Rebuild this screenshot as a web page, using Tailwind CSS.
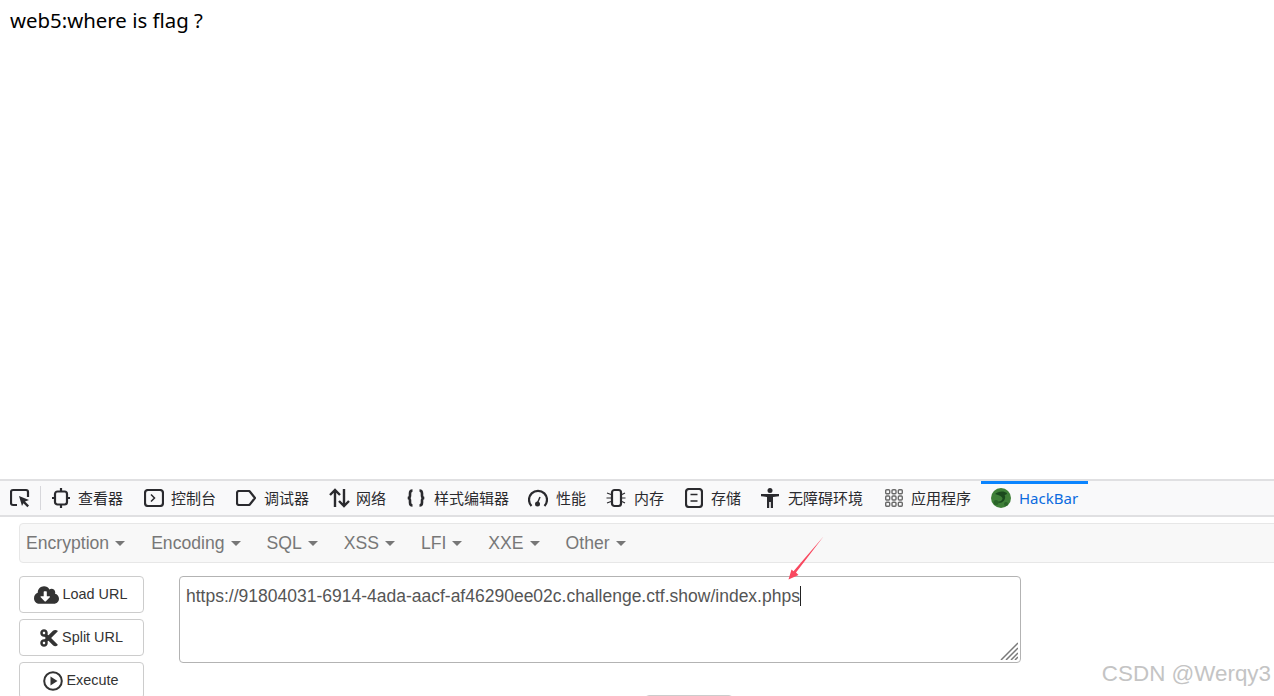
<!DOCTYPE html>
<html lang="zh">
<head>
    <meta charset="UTF-8">
    <meta name="viewport" content="width=device-width, initial-scale=1.0">
    <title>web5</title>
    <script src="https://cdn.jsdelivr.net/npm/@tailwindcss/browser@4"></script>
</head>
<body class="relative h-[696px] overflow-hidden bg-white font-['Liberation_Sans',sans-serif]">
    <!-- page -->
    <div class="h-[479px] pl-[10px] pt-[6px] text-[20.4px] leading-[28px] text-black font-['Noto_Sans',sans-serif]">web5:where is flag ?</div>

    <!-- devtools tabs -->
    <div class="flex h-[38px] items-stretch border-t-2 border-b-2 border-[#e0e0e2] bg-[#f9f9fa] text-[15px] text-[#2a2a2e] font-['Noto_Sans_CJK_SC',sans-serif]">
        <div class="flex w-[40px] items-center pl-[10px]">
            <svg class="w-[21px] h-[20px]" viewBox="0 0 21 20" fill="none" stroke="#2a2a2e" stroke-width="2.2"><path d="M7 17H3a2 2 0 0 1-2-2V4a2 2 0 0 1 2-2h13a2 2 0 0 1 2 2v5"/><path d="M9 8l10 4-4 1.6 4 4-1.6 1.6-4-4L12 18z" fill="#2a2a2e" stroke="none"/></svg>
        </div>
        <div class="my-[5px] w-px bg-[#d7d7db]"></div>
        <div class="flex items-center pl-[11px] w-[93px]">
            <svg class="w-[18px] h-[20px] mr-[8px]" viewBox="0 0 18 20" fill="none" stroke="#2a2a2e" stroke-width="2.2"><rect x="3" y="3.5" width="12" height="13" rx="2.5"/><path d="M9 0v3.500M9 16.500V20M0 10h3M15 10h3"/></svg>
            <span>查看器</span>
        </div>
        <div class="flex items-center pl-[10px] w-[92px]">
            <svg class="w-[20px] h-[18px] mr-[7px]" viewBox="0 0 20 18" fill="none" stroke="#2a2a2e" stroke-width="2.2"><rect x="1" y="1" width="18" height="16" rx="3"/><path d="M7 5.500l3.500 3.500L7 12.500" stroke-width="1.5"/></svg>
            <span>控制台</span>
        </div>
        <div class="flex items-center pl-[10px] w-[93px]">
            <svg class="w-[20px] h-[16px] mr-[8px]" viewBox="0 0 20 16" fill="none" stroke="#2a2a2e" stroke-width="2.2"><path d="M3 1h9.500a2 2 0 0 1 1.500.7L19 8l-5 6.300a2 2 0 0 1-1.500.7H3a2 2 0 0 1-2-2V3a2 2 0 0 1 2-2z"/></svg>
            <span>调试器</span>
        </div>
        <div class="flex items-center pl-[10px] w-[77px]">
            <svg class="w-[21px] h-[20px] mr-[6px]" viewBox="0 0 21 20" fill="none" stroke="#2a2a2e" stroke-width="2.4"><path d="M6 19V2M1 7l5-5 5 5M15 1v17M10 13l5 5 5-5"/></svg>
            <span>网络</span>
        </div>
        <div class="flex items-center pl-[10px] w-[122px]">
            <svg class="w-[20px] h-[20px] mr-[8px]" viewBox="0 0 20 20" fill="none" stroke="#2a2a2e" stroke-width="2.6"><path d="M6.500 2.500C4.500 2.500 4 3.500 4 5.500v2c0 1.500-.8 2.500-2.300 2.500C3.200 10 4 11 4 12.500v2c0 2 .5 3 2.500 3M13.500 2.500c2 0 2.500 1 2.500 3v2c0 1.500.8 2.500 2.300 2.500-1.500 0-2.300 1-2.300 2.500v2c0 2-.5 3-2.500 3"/></svg>
            <span>样式编辑器</span>
        </div>
        <div class="flex items-center pl-[10px] w-[78px]">
            <svg class="w-[20px] h-[19px] mr-[8px]" viewBox="0 0 20 19" fill="none" stroke="#2a2a2e" stroke-width="2.2"><path d="M3.500 17A9 9 0 1 1 16.500 17"/><path d="M9 15l3-7" stroke-width="1.5"/><circle cx="9.500" cy="15" r="2.500" fill="#2a2a2e" stroke="none"/></svg>
            <span>性能</span>
        </div>
        <div class="flex items-center pl-[10px] w-[78px]">
            <svg class="w-[20px] h-[20px] mr-[8px]" viewBox="0 0 20 20" fill="none" stroke="#2a2a2e"><rect x="6" y="2" width="9" height="16" rx="2.500" stroke-width="2.2"/><path d="M1 5l4 1.500M0.500 10H5M1 15l4-1.500M16 6.500l3-1.500M16 10h3.500M16 13.500l3 1.500" stroke-width="1.2"/></svg>
            <span>内存</span>
        </div>
        <div class="flex items-center pl-[11px] w-[78px]">
            <svg class="w-[18px] h-[20px] mr-[8px]" viewBox="0 0 18 20" fill="none" stroke="#2a2a2e" stroke-width="2.2"><rect x="1" y="1" width="16" height="18" rx="3"/><path d="M5.500 6.500h7M5.500 13h7" stroke-width="1.5"/></svg>
            <span>存储</span>
        </div>
        <div class="flex items-center pl-[9px] w-[123px]">
            <svg class="w-[18px] h-[20px] mr-[9px]" viewBox="0 0 18 20" fill="#2a2a2e"><circle cx="9" cy="2.500" r="2.500"/><path d="M0 6h18v2.200l-6 .8V20H9.800v-6H8.200v6H6V9l-6-.8z"/></svg>
            <span>无障碍环境</span>
        </div>
        <div class="flex items-center pl-[10px] w-[106px]">
            <svg class="w-[18px] h-[18px] mr-[8px]" viewBox="0 0 18 18" fill="none" stroke="#6a6a6a" stroke-width="1.4"><rect x="0.700" y="0.700" width="4" height="4" rx="1"/><rect x="7" y="0.700" width="4" height="4" rx="1"/><rect x="13.300" y="0.700" width="4" height="4" rx="1"/><rect x="0.700" y="7" width="4" height="4" rx="1"/><rect x="7" y="7" width="4" height="4" rx="1"/><rect x="13.300" y="7" width="4" height="4" rx="1"/><rect x="0.700" y="13.300" width="4" height="4" rx="1"/><rect x="7" y="13.300" width="4" height="4" rx="1"/><rect x="13.300" y="13.300" width="4" height="4" rx="1"/></svg>
            <span>应用程序</span>
        </div>
        <div class="flex w-[107px] items-center border-t-[3px] border-[#0a84ff] pb-[3px] pl-[10px] text-[#0b6bdf] font-['Noto_Sans',sans-serif]">
            <svg class="w-[20px] h-[20px] mr-[8px]" viewBox="0 0 20 20"><circle cx="10" cy="10" r="10" fill="#3f8038"/><path d="M4 6c3-3 9-3.500 12-1 0 1-1 2-2.500 2 1.500 2 .5 6-3 7.500-2 .7-4 .3-5.500-.5 3 0 6.500-1 6.500-3.500 0-1.500-3-3.500-7.500-4.500z" fill="#1b4a1e"/><circle cx="5" cy="14.500" r="2.500" fill="#2a6429"/><circle cx="15" cy="16" r="2" fill="#2a6429"/></svg>
            <span>HackBar</span>
        </div>
    </div>

    <!-- hackbar panel -->
    <div class="px-[19px] pt-[6px]">
        <div class="-mr-[30px] flex h-[40px] items-center rounded-[4px] border border-[#e7e7e7] bg-[#f8f8f8] pl-[6px] text-[17.6px] text-[#777]">
            <div class="flex items-center mr-[26px]">Encryption<span class="ml-[6px] mt-[2px] border-x-[5px] border-t-[5px] border-x-transparent border-t-[#777]"></span></div>
            <div class="flex items-center mr-[26px]">Encoding<span class="ml-[6px] mt-[2px] border-x-[5px] border-t-[5px] border-x-transparent border-t-[#777]"></span></div>
            <div class="flex items-center mr-[26px]">SQL<span class="ml-[6px] mt-[2px] border-x-[5px] border-t-[5px] border-x-transparent border-t-[#777]"></span></div>
            <div class="flex items-center mr-[26px]">XSS<span class="ml-[6px] mt-[2px] border-x-[5px] border-t-[5px] border-x-transparent border-t-[#777]"></span></div>
            <div class="flex items-center mr-[26px]">LFI<span class="ml-[6px] mt-[2px] border-x-[5px] border-t-[5px] border-x-transparent border-t-[#777]"></span></div>
            <div class="flex items-center mr-[26px]">XXE<span class="ml-[6px] mt-[2px] border-x-[5px] border-t-[5px] border-x-transparent border-t-[#777]"></span></div>
            <div class="flex items-center">Other<span class="ml-[6px] mt-[2px] border-x-[5px] border-t-[5px] border-x-transparent border-t-[#777]"></span></div>
        </div>

        <div class="mt-[13px] flex items-start">
            <div class="flex w-[125px] flex-col gap-[6px] text-[14.4px] text-[#333]">
                <div class="flex h-[37px] items-center justify-center rounded-[4px] border border-[#ccc] bg-white pr-[2px] pt-px">
                    <svg class="w-[25px] h-[20px] mr-[4px] -mt-px" viewBox="0 0 640 512" fill="#333"><path d="M537.600 226.600c4.100-10.700 6.400-22.400 6.400-34.600 0-53-43-96-96-96-19.700 0-38.100 6-53.300 16.200C367 64.200 315.300 32 256 32c-88.400 0-160 71.600-160 160 0 2.700.1 5.400.2 8.100C40.200 219.800 0 273.200 0 336c0 79.500 64.500 144 144 144h368c70.700 0 128-57.300 128-128 0-61.900-44-113.600-102.400-125.400zm-132.900 88.700L299.300 420.700c-6.200 6.200-16.400 6.200-22.600 0L171.300 315.300c-10.100-10.100-2.900-27.300 11.300-27.300H248V176c0-8.800 7.200-16 16-16h48c8.800 0 16 7.200 16 16v112h65.400c14.200 0 21.400 17.200 11.300 27.300z"/></svg>
                    Load URL
                </div>
                <div class="flex h-[37px] items-center justify-center rounded-[4px] border border-[#ccc] bg-white pt-px">
                    <svg class="w-[18px] h-[20px] mr-[4px] -mt-px" viewBox="0 0 448 512" fill="#333"><path d="M278.060 256L444.480 89.570c4.690-4.690 4.690-12.290 0-16.970-32.800-32.800-85.990-32.800-118.790 0L210.180 188.120l-24.860-24.860c4.310-10.920 6.680-22.810 6.680-35.260 0-53.020-42.980-96-96-96S0 74.980 0 128s42.980 96 96 96c4.540 0 8.990-.32 13.360-.93L142.290 256l-32.930 32.930c-4.370-.61-8.830-.93-13.360-.93-53.020 0-96 42.980-96 96s42.980 96 96 96 96-42.980 96-96c0-12.450-2.370-24.340-6.680-35.260l24.860-24.860L325.690 439.400c32.800 32.800 85.990 32.800 118.790 0 4.690-4.680 4.690-12.280 0-16.970L278.060 256zM96 160c-17.640 0-32-14.360-32-32s14.360-32 32-32 32 14.360 32 32-14.360 32-32 32zm0 256c-17.640 0-32-14.360-32-32s14.360-32 32-32 32 14.360 32 32-14.360 32-32 32z"/></svg>
                    Split URL
                </div>
                <div class="flex h-[37px] items-center justify-center rounded-[4px] border border-[#ccc] bg-white pr-[2px] pt-px">
                    <svg class="w-[20px] h-[20px] mr-[4px]" viewBox="0 0 20 20"><circle cx="10" cy="10" r="8.800" fill="none" stroke="#333" stroke-width="2"/><path d="M7.500 5.500l7 4.500-7 4.500z" fill="#333"/></svg>
                    Execute
                </div>
            </div>

            <div class="relative ml-[35px] h-[87px] w-[842px] rounded-[4px] border border-[#b3b3b3] px-[6px] py-[6px] text-[17.5px] leading-[26px] text-[#555]">
                <span>https://91804031-6914-4ada-aacf-af46290ee02c.challenge.ctf.show/index.phps</span><span class="inline-block h-[20px] w-px bg-[#222] align-[-4px]"></span>
                <svg class="absolute right-[2px] bottom-[2px] w-[18px] h-[18px]" viewBox="0 0 18 18" stroke="#7a7a7a" stroke-width="1.5"><path d="M1 18L18 1M6 18L18 6M11 18l7-7M15 18l3-3"/></svg>
            </div>
        </div>
    </div>

    <!-- second row button peeking in at the bottom -->
    <div class="absolute left-[645px] top-[695px] h-[30px] w-[88px] rounded-[4px] border border-[#ccc]"></div>

    <!-- annotation arrow -->
    <svg class="absolute left-[780px] top-[530px] w-[50px] h-[55px]" viewBox="0 0 50 55"><path d="M43.500 6.500L16 42.500 18.500 45 8.500 49.500 11.500 39.500 13.500 41.300z" fill="#f9485f"/></svg>

    <!-- watermark -->
    <div class="absolute right-[3px] top-[660px] text-[22.4px] leading-[28px] text-[#c4c4c4]">CSDN @Werqy3</div>
</body>
</html>
